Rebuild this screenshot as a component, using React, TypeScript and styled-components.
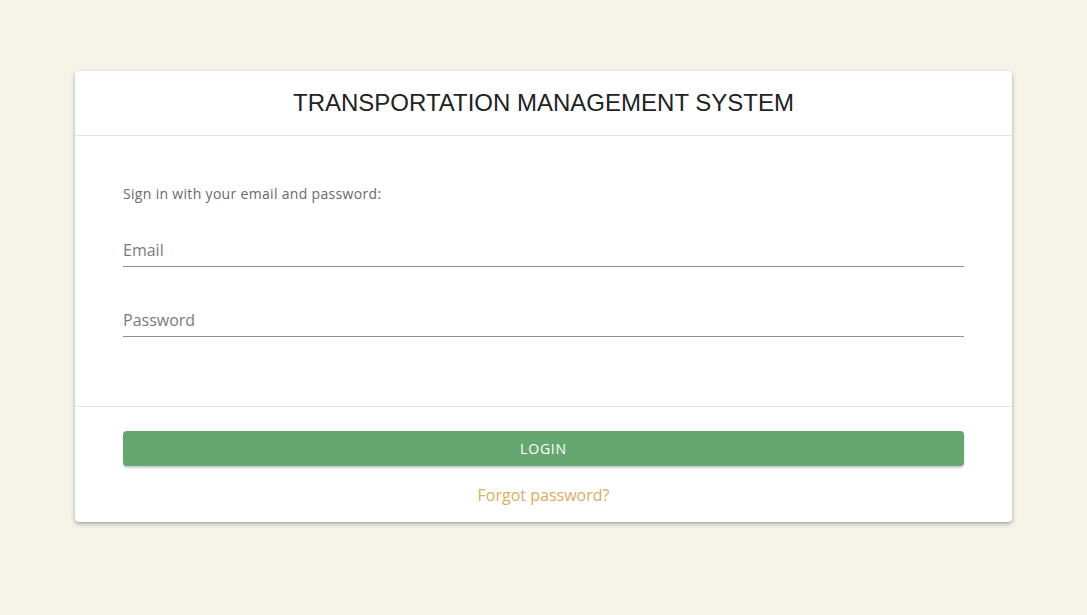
import styled, { createGlobalStyle } from 'styled-components';

const GlobalStyle = createGlobalStyle`
  html, body {
    margin: 0;
    padding: 0;
    background-color: #f6f3e8;
  }
  * {
    box-sizing: border-box;
  }
`;

const Page = styled.div`
  min-height: 615px;
  padding-top: 71px;
  display: flex;
  justify-content: center;
  align-items: flex-start;
  font-family: 'Open Sans', 'Lato', sans-serif;
  font-weight: 300;
`;

const Card = styled.div`
  width: 937px;
  background-color: #ffffff;
  border-radius: 4px;
  box-shadow: 0 2px 5px rgba(0, 0, 0, 0.26), 0 1px 2px rgba(0, 0, 0, 0.12);
  display: flex;
  flex-direction: column;
`;

const Header = styled.div`
  height: 65px;
  border-bottom: 1px solid #e4e4e4;
  display: flex;
  align-items: center;
  justify-content: center;
`;

const Title = styled.h1`
  margin: 0;
  font-family: 'Liberation Sans', Arial, sans-serif;
  font-weight: 400;
  font-size: 24px;
  color: #222222;
`;

const Body = styled.div`
  padding: 48px 48px 69px;
  border-bottom: 1px solid #e4e4e4;
  display: flex;
  flex-direction: column;
`;

const Hint = styled.p`
  margin: 0 0 34px;
  font-size: 14px;
  line-height: 20px;
  color: #6a6a6a;
  font-weight: 400;
  letter-spacing: 0.32px;
`;

const Field = styled.input<{ $last?: boolean }>`
  display: block;
  width: 100%;
  height: 29px;
  margin: 0 0 ${(p) => (p.$last ? 0 : 41)}px;
  padding: 0 0 4px;
  border: none;
  border-bottom: 1px solid #8f8f8f;
  outline: none;
  background: transparent;
  font-family: inherit;
  font-weight: 400;
  font-size: 16px;
  line-height: 24px;
  color: #333333;
  &::placeholder {
    color: #7a7a7a;
  }
`;

const Footer = styled.div`
  padding: 24px 48px 15px;
  display: flex;
  flex-direction: column;
  align-items: center;
`;

const LoginButton = styled.button`
  width: 100%;
  height: 35px;
  border: none;
  border-radius: 4px;
  background-color: #66a66f;
  color: #ffffff;
  font-family: inherit;
  font-weight: 400;
  font-size: 14px;
  letter-spacing: 0.8px;
  box-shadow: 0 2px 2px rgba(0, 0, 0, 0.2);
  cursor: pointer;
`;

const ForgotLink = styled.a`
  margin-top: 17px;
  font-size: 16px;
  font-weight: 400;
  line-height: 24px;
  color: #dfaa62;
  text-decoration: none;
  cursor: pointer;
`;

export default function App() {
  return (
    <>
      <GlobalStyle />
      <Page>
        <Card>
          <Header>
            <Title>TRANSPORTATION MANAGEMENT SYSTEM</Title>
          </Header>
          <Body>
            <Hint>Sign in with your email and password:</Hint>
            <Field type="email" placeholder="Email" />
            <Field type="password" placeholder="Password" $last />
          </Body>
          <Footer>
            <LoginButton>LOGIN</LoginButton>
            <ForgotLink>Forgot password?</ForgotLink>
          </Footer>
        </Card>
      </Page>
    </>
  );
}
